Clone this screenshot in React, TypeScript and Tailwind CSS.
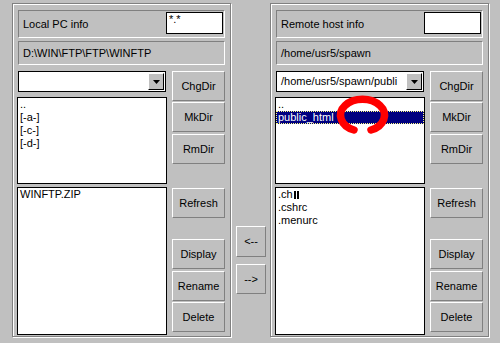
import React from 'react';

const raised = 'border border-t-white border-l-white border-b-[#808080] border-r-[#808080]';
const sunken = 'border border-t-[#808080] border-l-[#808080] border-b-white border-r-white';

const Btn = ({ children, className = '' }: { children: React.ReactNode; className?: string }) => (
  <div className={`flex h-[30px] w-[53px] items-center justify-center ${raised} ${className}`}>{children}</div>
);

const Combo = ({ text }: { text: string }) => (
  <div className="ml-[1px] flex h-[21px] w-[148px] items-center border border-black bg-white">
    <div className="flex-1 overflow-hidden whitespace-nowrap pl-[4px] leading-[13px]">{text}</div>
    <div className={`mr-[1px] flex h-[17px] w-[16px] shrink-0 items-center justify-center bg-[#c0c0c0] ${raised} border-b-black border-r-black`}>
      <svg width="7" height="4" viewBox="0 0 7 4">
        <polygon points="0,0 7,0 3.5,4" fill="black" />
      </svg>
    </div>
  </div>
);

interface Item {
  text: React.ReactNode;
  selected?: boolean;
}

const List = ({ items, className = '', children }: { items: Item[]; className?: string; children?: React.ReactNode }) => (
  <div className={`relative border border-black bg-white ${className}`}>
    {items.map((it, i) => (
      <div
        key={i}
        className={
          it.selected
            ? 'h-[13px] whitespace-nowrap bg-[#000080] pl-[2px] leading-[13px] text-white outline-1 -outline-offset-1 outline-dotted outline-[#ffff80]'
            : 'h-[13px] whitespace-nowrap pl-[2px] leading-[13px]'
        }
      >
        {it.text}
      </div>
    ))}
    {children}
  </div>
);

interface PanelProps {
  label: string;
  mask: string;
  path: string;
  combo: string;
  dirs: Item[];
  files: Item[];
  overlay?: React.ReactNode;
}

const Panel = ({ label, mask, path, combo, dirs, files, overlay }: PanelProps) => (
  <div className="h-[334px] w-[219px] shrink-0 border border-[#808080] px-[5px] pt-[6px] shadow-[inset_1px_1px_0_#fff,1px_1px_0_#fff]">
    <div className={`flex h-[28px] items-start ${sunken}`}>
      <div className="flex-1 self-center pl-[4px] leading-[13px]">{label}</div>
      <div className="mr-[1px] mt-[1px] h-[22px] w-[57px] border border-black bg-white pl-[2px] pt-[1px] leading-[11px]">{mask}</div>
    </div>
    <div className={`mt-[3px] flex h-[24px] items-center pl-[4px] ${sunken}`}>{path}</div>
    <div className="mt-[6px] flex">
      <div className="ml-[-1px] flex w-[150px] flex-col">
        <Combo text={combo} />
        <List items={dirs} className="mt-[5px] h-[87px]">
          {overlay}
        </List>
        <List items={files} className="mt-[3px] h-[148px]" />
      </div>
      <div className="ml-[5px] flex flex-col">
        <Btn>ChgDir</Btn>
        <Btn className="mt-[1px]">MkDir</Btn>
        <Btn className="mt-[2px]">RmDir</Btn>
        <Btn className="mt-[24px]">Refresh</Btn>
        <Btn className="mt-[21px]">Display</Btn>
        <Btn className="mt-[2px]">Rename</Btn>
        <Btn className="mt-[1px]">Delete</Btn>
      </div>
    </div>
  </div>
);

const RedMark = () => (
  <svg className="pointer-events-none absolute left-[56px] top-[-8px]" width="60" height="50" viewBox="0 0 60 50">
    <path d="M 22 40 A 22 16 0 1 1 39 40" fill="none" stroke="#ff0000" strokeWidth="7.5" strokeLinecap="round" />
  </svg>
);

export default function App() {
  return (
    <div className="flex h-[343px] w-[500px] items-start bg-[#c0c0c0] pl-[12px] pt-[3px] font-['Liberation_Sans',Arial,sans-serif] text-[11px] text-black">
      <Panel
        label="Local PC info"
        mask="*.*"
        path="D:\WIN\FTP\FTP\WINFTP"
        combo=""
        dirs={[{ text: '..' }, { text: '[-a-]' }, { text: '[-c-]' }, { text: '[-d-]' }]}
        files={[{ text: 'WINFTP.ZIP' }]}
      />
      <div className="flex w-[39px] shrink-0 flex-col pl-[5px] pt-[223px]">
        <div className={`flex h-[31px] w-[30px] items-center justify-center ${raised}`}>{'<--'}</div>
        <div className={`mt-[7px] flex h-[30px] w-[30px] items-center justify-center ${raised}`}>{'-->'}</div>
      </div>
      <Panel
        label="Remote host info"
        mask=""
        path="/home/usr5/spawn"
        combo="/home/usr5/spawn/publi"
        dirs={[{ text: '..' }, { text: 'public_html', selected: true }]}
        files={[
          {
            text: (
              <span className="inline-flex items-end">
                .ch
                <span className="mb-[2px] ml-[1px] inline-block h-[8px] w-[2px] bg-black" />
                <span className="mb-[2px] ml-[1px] inline-block h-[8px] w-[2px] bg-black" />
              </span>
            ),
          },
          { text: '.cshrc' },
          { text: '.menurc' },
        ]}
        overlay={<RedMark />}
      />
    </div>
  );
}
